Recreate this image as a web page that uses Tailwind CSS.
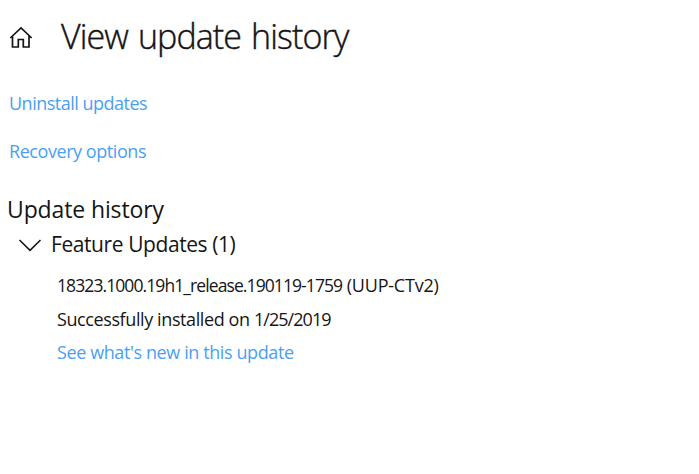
<!DOCTYPE html>
<html lang="en"><head><meta charset="utf-8"><title>View update history</title>
<script src="https://cdn.jsdelivr.net/npm/@tailwindcss/browser@4"></script></head>
<body class="bg-white text-[#151515] overflow-hidden font-['Open_Sans','Noto_Sans',sans-serif]">
<main class="w-[699px] h-[474px] whitespace-nowrap">
<header class="flex items-center h-[72px] pl-[9px]">
<svg class="w-6 h-6 mt-[2px] shrink-0" viewBox="0 0 24 24" fill="none" stroke="#151515" stroke-width="1.7"><path d="M1.3 13 12 3 22.7 13M3.5 11V22H9.3V14.5H14.3V22H20V11"/></svg>
<h1 class="ml-[28px] text-[34px] leading-[50px] tracking-[-0.9px] [word-spacing:2px] font-light [-webkit-text-stroke:0.4px_#151515]">View update history</h1>
</header>
<nav class="pl-[9px] pt-[17px] flex flex-col items-start gap-5 text-[18px] leading-[28px] text-[#4a9ff2]">
<a class="tracking-[-0.5px]">Uninstall updates</a>
<a class="tracking-[-0.44px]">Recovery options</a>
</nav>
<section>
<h2 class="mt-[27px] pl-[7px] text-[23px] leading-[34px] tracking-[-0.12px]">Update history</h2>
<div class="flex items-center pl-[18px] mt-[2px]">
<svg class="w-6 h-6 shrink-0" viewBox="0 0 24 24" fill="none" stroke="#151515" stroke-width="1.6"><path d="M1.5 8 12 18.3 22.5 8"/></svg>
<h3 class="ml-[9px] text-[21px] leading-[32px] tracking-[-0.42px]">Feature Updates (1)</h3>
</div>
<div class="pl-[57px] mt-[9px] text-[18px] leading-[33.7px] tracking-[-0.4px] flex flex-col items-start">
<p><span class="text-[17.5px] tracking-[-0.91px]">18323.1000.19h1_release.190119-1759</span><span class="tracking-[-0.2px]"> (UUP-CTv2)</span></p>
<p>Successfully installed on <span class="tracking-[-0.95px]">1/25/2019</span></p>
<a class="text-[#4a9ff2]">See what's new in this update</a>
</div>
</section>
</main></body></html>
